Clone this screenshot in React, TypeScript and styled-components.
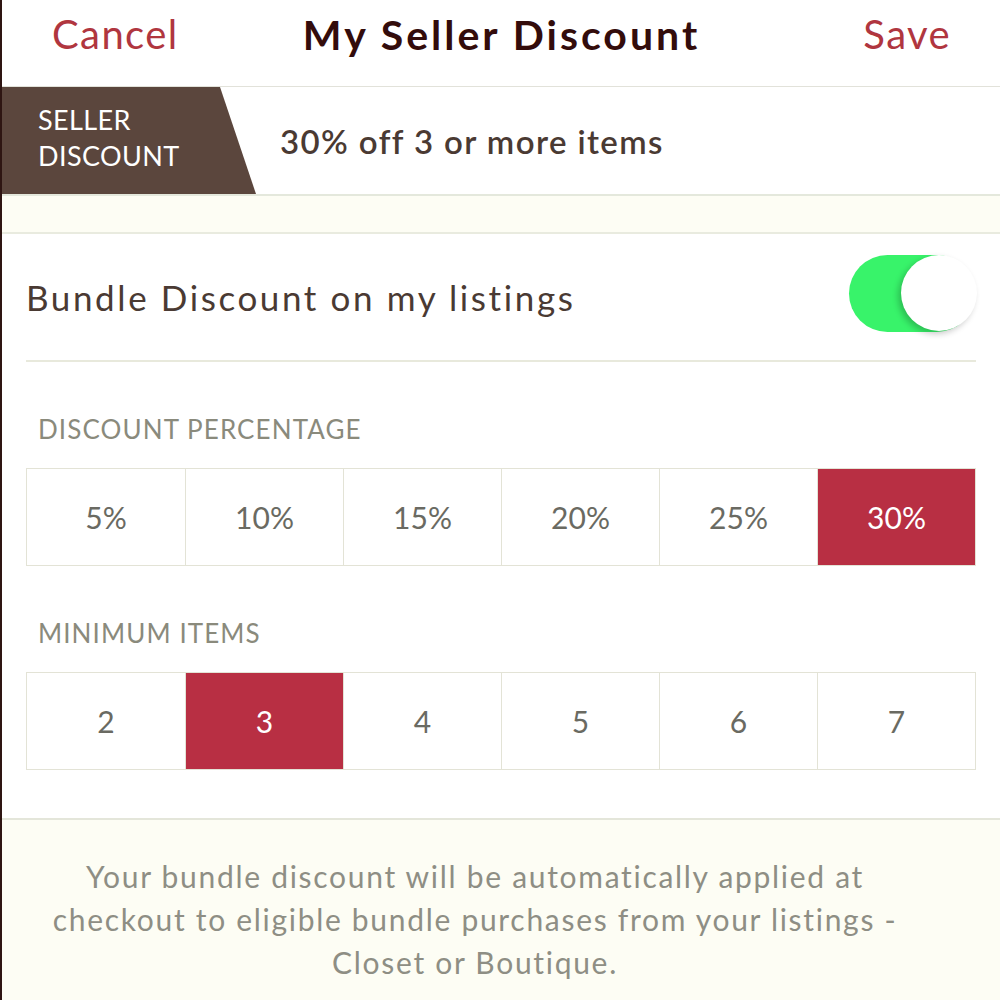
import React, { useState } from 'react'
import styled, { createGlobalStyle } from 'styled-components'

const GlobalStyle = createGlobalStyle`
  html, body {
    margin: 0;
    padding: 0;
    background: #ffffff;
  }
  body {
    font-family: Lato, "Open Sans", "Liberation Sans", sans-serif;
  }
`

const PERCENTS = [5, 10, 15, 20, 25, 30]
const MIN_ITEMS = [2, 3, 4, 5, 6, 7]

const App = () => {
  const [enabled, setEnabled] = useState(true)
  const [percent, setPercent] = useState(30)
  const [minItems, setMinItems] = useState(3)

  return (
    <Page>
      <GlobalStyle />
      <NavBar>
        <NavButton>Cancel</NavButton>
        <Title>My Seller Discount</Title>
        <NavButton $right>Save</NavButton>
      </NavBar>

      <Banner>
        <Tag>
          SELLER
          <br />
          DISCOUNT
        </Tag>
        <Summary>
          {percent}% off {minItems} or more items
        </Summary>
      </Banner>

      <Spacer />

      <Card>
        <ToggleRow>
          <RowLabel>Bundle Discount on my listings</RowLabel>
          <Switch $on={enabled} onClick={() => setEnabled(!enabled)}>
            <Knob $on={enabled} />
          </Switch>
        </ToggleRow>

        <SectionLabel>Discount Percentage</SectionLabel>
        <Segments>
          {PERCENTS.map((p) => (
            <Segment key={p} $active={p === percent} onClick={() => setPercent(p)}>
              {p}%
            </Segment>
          ))}
        </Segments>

        <SectionLabel>Minimum Items</SectionLabel>
        <Segments>
          {MIN_ITEMS.map((n) => (
            <Segment key={n} $active={n === minItems} onClick={() => setMinItems(n)}>
              {n}
            </Segment>
          ))}
        </Segments>
      </Card>

      <Footer>
        Your bundle discount will be automatically applied at
        <br />
        checkout to eligible bundle purchases from your listings -
        <br />
        Closet or Boutique.
      </Footer>
    </Page>
  )
}

export default App

const Page = styled.div`
  width: 1000px;
  height: 1000px;
  box-sizing: border-box;
  border-left: 2px solid #2e1512;
  overflow: hidden;
  display: flex;
  flex-direction: column;
  background: #fdfdf4;
`

const NavBar = styled.div`
  height: 87px;
  flex-shrink: 0;
  display: grid;
  grid-template-columns: 1fr auto 1fr;
  align-items: center;
  padding: 0 49px 18px 50px;
  box-sizing: border-box;
  background: #ffffff;
  border-bottom: 1px solid #e2e2da;
`

const NavButton = styled.span<{ $right?: boolean }>`
  justify-self: ${(p) => (p.$right ? 'end' : 'start')};
  font-size: 40px;
  letter-spacing: 1.4px;
  color: #b0363f;
`

const Title = styled.h1`
  margin: 0;
  font-size: 41px;
  font-weight: 700;
  letter-spacing: 3px;
  color: #330c0b;
`

const Banner = styled.div`
  height: 107px;
  flex-shrink: 0;
  display: flex;
  align-items: center;
  background: #ffffff;
  border-bottom: 2px solid #e4e8dc;
`

const Tag = styled.div`
  align-self: stretch;
  width: 254px;
  box-sizing: border-box;
  padding: 15px 0 0 36px;
  background: #5b463d;
  clip-path: polygon(0 0, 218px 0, 100% 100%, 0 100%);
  color: #ffffff;
  font-size: 27px;
  letter-spacing: 0.4px;
  line-height: 36px;
`

const Summary = styled.div`
  margin-left: 24px;
  font-size: 33px;
  font-weight: 600;
  letter-spacing: 1.4px;
  color: #4a3a33;
`

const Spacer = styled.div`
  height: 36px;
  flex-shrink: 0;
  background: #fdfdf4;
  border-bottom: 2px solid #e9ebdf;
`

const Card = styled.div`
  flex-shrink: 0;
  background: #ffffff;
  padding: 0 24px 48px 24px;
  border-bottom: 2px solid #e4e6da;
`

const ToggleRow = styled.div`
  height: 126px;
  display: flex;
  align-items: center;
  justify-content: space-between;
  border-bottom: 2px solid #e8e9dc;
`

const RowLabel = styled.span`
  font-size: 35px;
  letter-spacing: 2.6px;
  color: #4a3a33;
`

const Switch = styled.div<{ $on: boolean }>`
  position: relative;
  width: 126px;
  height: 77px;
  margin: 0 1px 7px 0;
  border-radius: 39px;
  background: ${(p) => (p.$on ? '#38f36a' : '#e6e6e6')};
  cursor: pointer;
`

const Knob = styled.div<{ $on: boolean }>`
  position: absolute;
  top: 0;
  left: ${(p) => (p.$on ? '52px' : '0')};
  width: 76px;
  height: 76px;
  border-radius: 50%;
  background: #ffffff;
  box-shadow: -3px 3px 6px rgba(0, 0, 0, 0.22);
`

const SectionLabel = styled.div`
  height: 106px;
  box-sizing: border-box;
  padding: 50px 0 0 12px;
  line-height: 34px;
  font-size: 26px;
  letter-spacing: 1.1px;
  text-transform: uppercase;
  color: #8a8a7c;
`

const Segments = styled.div`
  display: grid;
  grid-template-columns: repeat(6, 1fr);
  box-sizing: border-box;
  height: 98px;
  border: 1px solid #e3e3d6;
`

const Segment = styled.div<{ $active: boolean }>`
  display: flex;
  align-items: center;
  justify-content: center;
  font-size: 30px;
  color: ${(p) => (p.$active ? '#ffffff' : '#6a6a62')};
  background: ${(p) => (p.$active ? '#b82f43' : '#ffffff')};
  border-left: 1px solid #e3e3d6;
  cursor: pointer;

  &:first-child {
    border-left: none;
  }
`

const Footer = styled.div`
  flex: 1;
  padding: 35px 52px 0 0;
  text-align: center;
  font-size: 30px;
  letter-spacing: 1.7px;
  line-height: 43px;
  color: #8e8e84;
  background: #fdfdf4;
`
